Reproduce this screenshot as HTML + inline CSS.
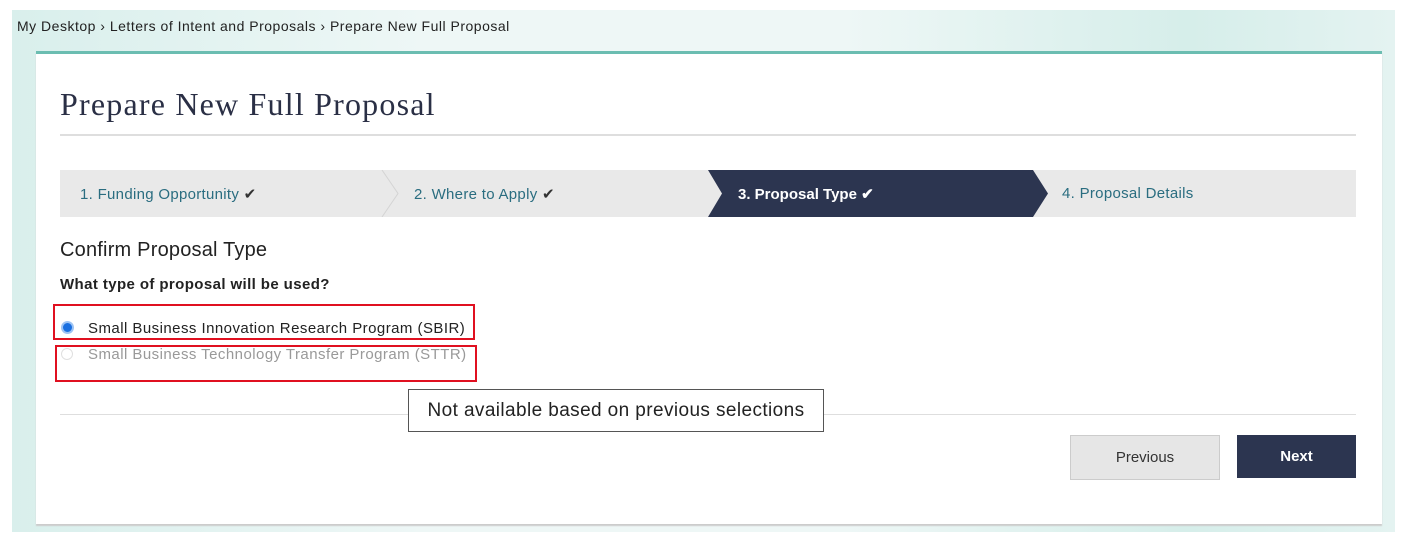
<!DOCTYPE html>
<html><head><style>
body{margin:0;width:1402px;height:534px;background:#fff;position:relative;overflow:hidden;font-family:"Liberation Sans",sans-serif;}
.frame{position:absolute;left:12px;top:10px;width:1383px;height:522px;background:linear-gradient(90deg,#d9efec 0%,#eef7f6 30%,#eef7f6 60%,#d6eeea 85%,#e4f3f1 100%);}
.bc{position:absolute;left:17px;top:18px;font-size:14px;color:#222;letter-spacing:0.5px;}
.card{position:absolute;left:36px;top:51px;width:1346px;height:470px;background:#fff;border-top:3px solid #6bbdb1;box-shadow:0 2px 1px #ccc;}
.a{position:absolute;}
h1{position:absolute;left:60px;top:86px;margin:0;font-family:"Liberation Serif",serif;font-weight:normal;font-size:32px;letter-spacing:1.2px;color:#2a2f45;}
.hr{position:absolute;left:60px;width:1296px;height:2px;background:#dedede;}
.steps{position:absolute;left:60px;top:170px;width:1296px;height:47px;background:#e9e9e9;}
.st{position:absolute;top:185px;font-size:15px;color:#2a6d80;letter-spacing:0.3px;}
.rb{position:absolute;border:2px solid #e01020;}
.btn{position:absolute;top:435px;height:43px;font-size:15px;display:flex;align-items:center;justify-content:center;}
</style></head><body>
<div class="frame"></div>
<div class="bc">My Desktop › Letters of Intent and Proposals › Prepare New Full Proposal</div>
<div class="card"></div>
<h1>Prepare New Full Proposal</h1>
<div class="hr" style="top:134px"></div>
<div class="steps"></div>
<svg class="a" style="left:380px;top:170px" width="20" height="47"><polyline points="2,0 18,23.5 2,47" fill="none" stroke="#d4d4d4" stroke-width="1"/></svg>
<svg class="a" style="left:708px;top:170px" width="345" height="47"><polygon points="0,0 325,0 340,23.5 325,47 0,47 14,23.5" fill="#2c3550"/></svg>
<div class="st" style="left:80px">1. Funding Opportunity <span style="color:#333">✔</span></div>
<div class="st" style="left:414px">2. Where to Apply <span style="color:#333">✔</span></div>
<div class="st" style="left:738px;color:#fff;font-weight:bold;letter-spacing:0">3. Proposal Type ✔</div>
<div class="st" style="left:1062px">4. Proposal Details</div>
<div class="a" style="left:60px;top:239px;font-size:20px;color:#222;letter-spacing:0.2px">Confirm Proposal Type</div>
<div class="a" style="left:60px;top:276px;font-size:15px;font-weight:bold;color:#222;letter-spacing:0.4px">What type of proposal will be used?</div>
<div class="rb" style="left:53px;top:304px;width:418px;height:32px"></div>
<div class="rb" style="left:55px;top:345px;width:418px;height:33px"></div>
<div class="a" style="left:61px;top:321px;width:9px;height:9px;border-radius:50%;background:#1a6fe0;border:2px solid #9cc3f4"></div>
<div class="a" style="left:61px;top:348px;width:10px;height:10px;border-radius:50%;border:1px solid #e0e0e0"></div>
<div class="a" style="left:88px;top:320px;font-size:15px;color:#222;letter-spacing:0.45px">Small Business Innovation Research Program (SBIR)</div>
<div class="a" style="left:88px;top:346px;font-size:15px;color:#999;letter-spacing:0.45px">Small Business Technology Transfer Program (STTR)</div>
<div class="hr" style="top:414px;height:1px"></div>
<div class="a" style="left:408px;top:389px;width:414px;height:41px;border:1px solid #555;background:#fff;font-size:19px;color:#222;letter-spacing:0.4px;display:flex;align-items:center;justify-content:center">Not available based on previous selections</div>
<div class="btn" style="left:1070px;width:148px;background:#e6e6e6;border:1px solid #ccc;color:#333">Previous</div>
<div class="btn" style="left:1237px;width:119px;background:#2c3550;color:#fff;font-weight:bold">Next</div>
</body></html>
